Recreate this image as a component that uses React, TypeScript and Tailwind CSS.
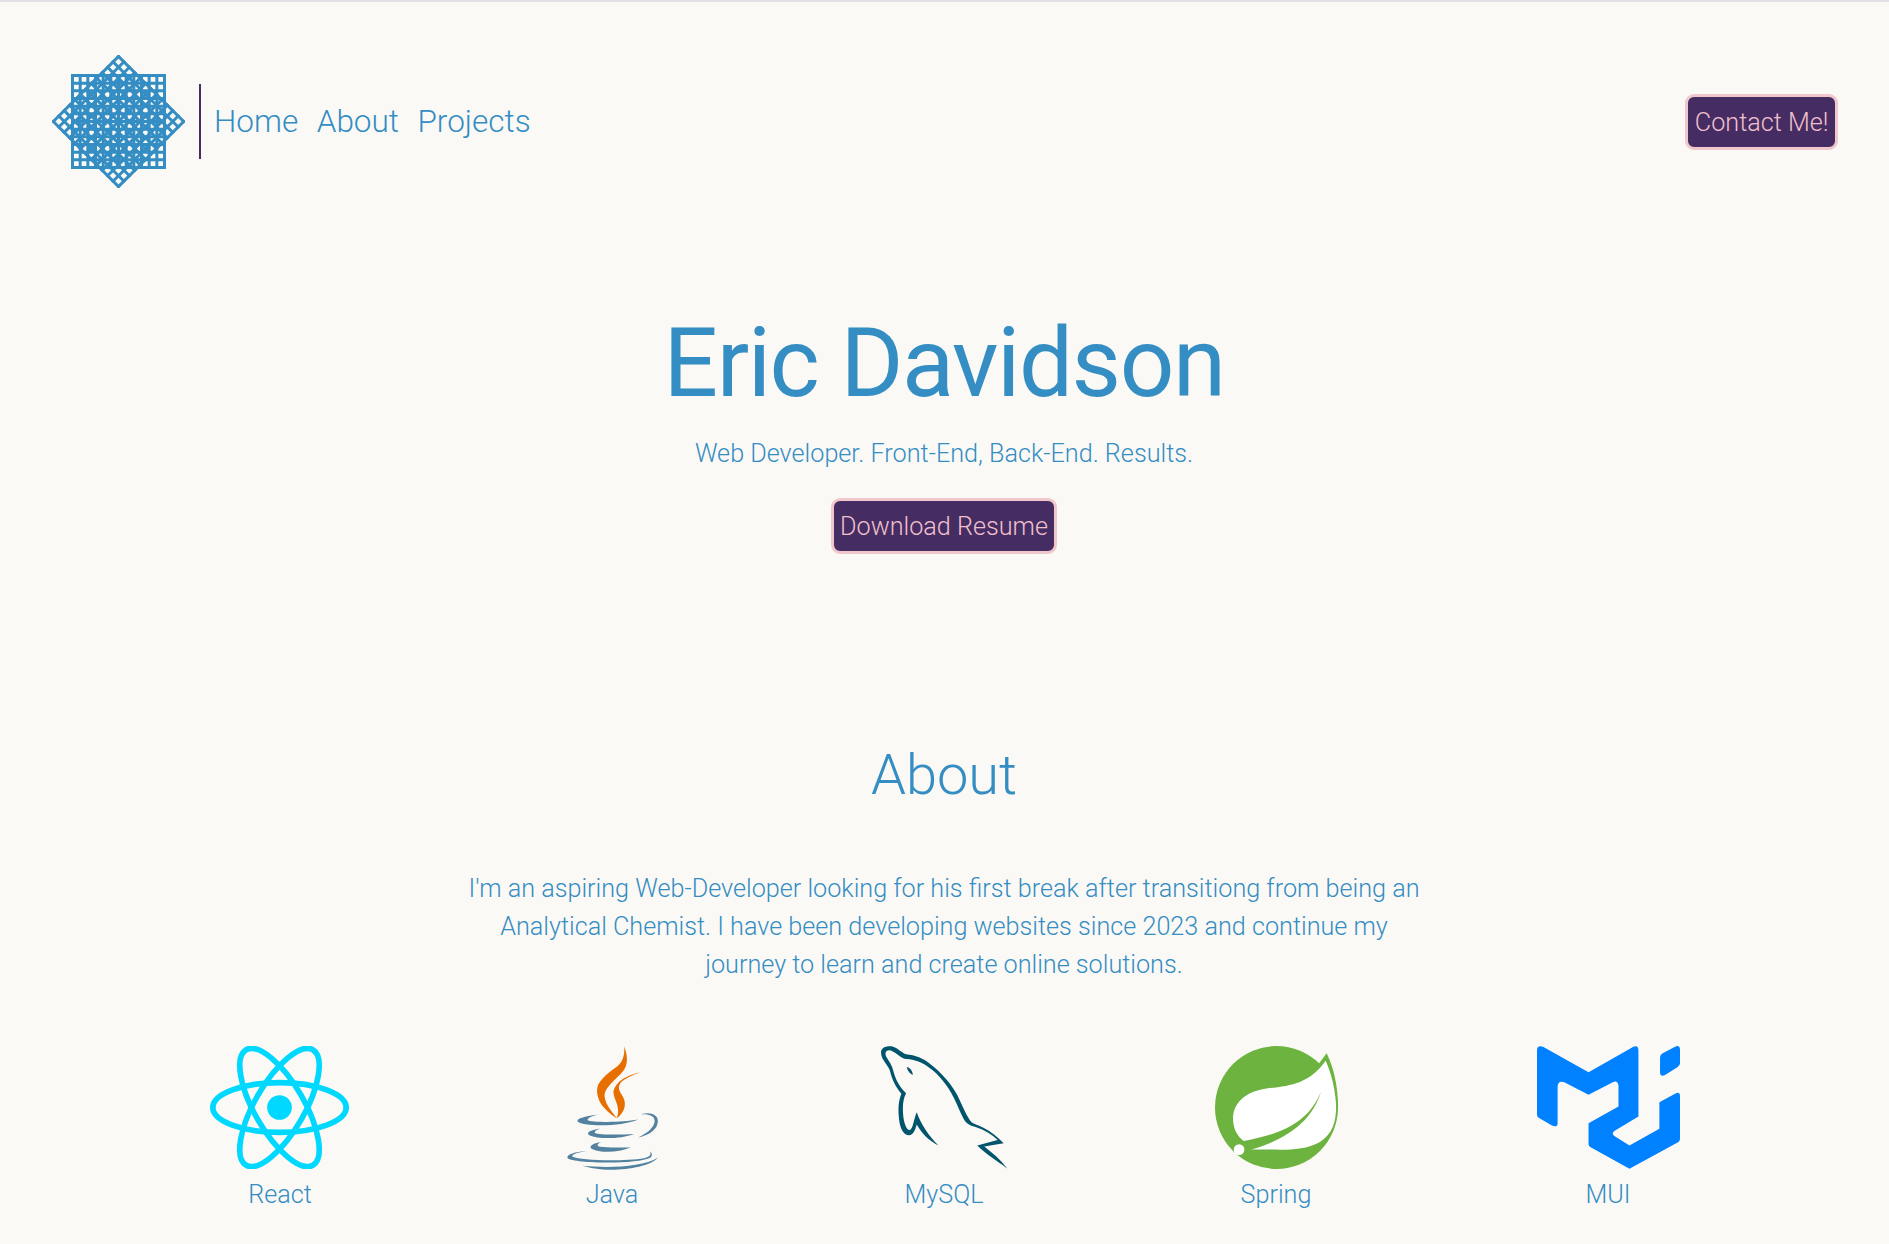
const lines = Array.from({ length: 13 }, (_, i) => i * (92 / 12));

function Grid({ rotate }: { rotate: number }) {
  return (
    <g transform={`rotate(${rotate} 66.5 66.5) translate(20.5 20.5)`} stroke="#348dc3" strokeWidth="3" fill="none">
      {lines.map((p) => (
        <g key={p}>
          <line x1={p} y1="-1.5" x2={p} y2="93.5" />
          <line x1="-1.5" y1={p} x2="93.5" y2={p} />
        </g>
      ))}
    </g>
  );
}

function Logo() {
  return (
    <svg viewBox="0 0 133 133" className="h-[133px] w-[133px]">
      <Grid rotate={0} />
      <Grid rotate={45} />
    </svg>
  );
}

function ReactIcon() {
  return (
    <svg viewBox="60 48 416 368" className="h-[123px] w-[139px] -translate-x-[1px]">
      <g fill="none" stroke="#00d8ff" strokeWidth="17">
        <ellipse cx="268" cy="232" rx="199.5" ry="74.5" />
        <ellipse cx="268" cy="232" rx="199.5" ry="74.5" transform="rotate(60 268 232)" />
        <ellipse cx="268" cy="232" rx="199.5" ry="74.5" transform="rotate(120 268 232)" />
      </g>
      <circle cx="268" cy="232" r="37" fill="#00d8ff" />
    </svg>
  );
}

function JavaIcon() {
  return (
    <svg viewBox="1128 45 274 372" className="h-[124px] w-[91px]">
      <g fill="#e76f00">
        <path d="M1300 45C1303 70 1295 90 1285 100C1270 115 1240 130 1222 160C1212 185 1225 215 1240 230C1252 243 1265 255 1278 262C1262 240 1243 220 1241 195C1240 175 1262 155 1288 130C1308 112 1316 85 1300 45Z" />
        <path d="M1348 123C1310 132 1274 150 1268 180C1266 205 1292 225 1278 262C1300 245 1308 222 1298 200C1288 182 1276 170 1292 152C1302 142 1325 132 1348 123Z" />
      </g>
      <g fill="#5382a1">
        <path d="M1225 250C1185 256 1155 262 1160 272C1170 286 1290 290 1342 266C1290 276 1200 274 1190 268C1188 262 1205 254 1225 250Z" />
        <path d="M1350 250C1385 240 1408 255 1400 280C1395 300 1370 314 1342 320C1372 305 1390 290 1392 270C1392 255 1375 248 1350 250Z" />
        <path d="M1228 293C1195 298 1185 306 1195 313C1225 326 1290 324 1330 309C1285 312 1225 312 1212 306C1210 301 1218 297 1228 293Z" />
        <path d="M1230 333C1200 338 1192 348 1205 355C1235 368 1285 364 1320 350C1285 350 1235 350 1222 346C1218 341 1223 337 1230 333Z" />
        <path d="M1190 360C1145 364 1125 373 1130 382C1150 398 1340 402 1380 380C1386 372 1384 367 1378 363C1382 372 1378 378 1360 382C1300 392 1170 390 1145 378C1138 371 1165 364 1190 360Z" />
        <path d="M1402 380C1380 405 1320 416 1260 417C1225 417 1195 412 1175 405C1250 412 1355 410 1402 380Z" />
      </g>
    </svg>
  );
}

function MysqlIcon() {
  return (
    <svg viewBox="63 47 377 368" className="h-[123px] w-[126px]">
      <path
        fill="#00546b"
        d="M63 66C63 52 78 46 95 48C112 52 122 66 138 72C165 74 190 84 212 102C245 128 272 158 292 195C305 222 315 248 328 268C334 280 350 282 368 291C392 303 412 320 430 338L372 348C395 366 422 388 441 414C412 392 378 372 351 345L412 328C395 312 372 298 348 290C330 286 318 280 310 265C296 238 288 212 272 185C252 152 228 124 196 104C175 91 155 86 132 85C118 80 105 64 90 60C78 59 74 66 78 78C86 92 96 104 100 122C106 146 118 170 138 188C130 202 126 225 130 260C133 280 140 300 150 298C160 290 160 268 170 245C182 280 205 315 235 345C205 330 185 308 170 282C165 298 160 315 145 314C128 312 118 290 116 255C114 232 116 208 124 190C104 165 95 145 90 122C85 104 63 90 63 66Z"
      />
      <path fill="#00546b" d="M140 110C150 112 158 122 158 134C150 130 142 122 140 110Z" />
    </svg>
  );
}

function SpringIcon() {
  return (
    <svg viewBox="1066 48 368 368" className="h-[123px] w-[123px]">
      <circle cx="1250" cy="232" r="184" fill="#6db33f" />
      <path fill="#6db33f" d="M1400 70L1370 110L1420 250L1434 232C1434 170 1422 115 1400 70Z" />
      <path
        fill="#ffffff"
        d="M1397 92C1350 160 1290 168 1220 175C1150 185 1118 225 1120 270C1122 300 1135 320 1152 332C1260 312 1345 280 1383 185C1355 280 1270 330 1175 358C1250 355 1320 368 1380 335C1420 310 1430 270 1428 220C1425 170 1412 125 1397 92Z"
      />
      <circle cx="1138" cy="358" r="16" fill="#ffffff" />
    </svg>
  );
}

function MuiIcon() {
  return (
    <svg viewBox="110 47 430 368" className="h-[123px] w-[143px]">
      <g fill="#0081ff">
        <path d="M110 60Q110 42 128 48L265 125L400 48Q415 42 415 60L415 258L345 300Q330 310 345 318L388 345L478 295L478 215L528 188Q540 183 540 197L540 325Q540 333 530 338L388 415L270 350Q265 347 265 340L265 278L355 228L355 165Q352 148 338 155L265 193L192 155Q172 148 172 170L172 278Q172 292 155 285L115 262Q110 259 110 252Z" />
        <path d="M480 80Q480 72 488 68L525 48Q540 42 540 58L540 98Q540 105 532 110L495 133Q480 140 480 125Z" />
      </g>
    </svg>
  );
}

const techs = [
  { name: "React", Icon: ReactIcon },
  { name: "Java", Icon: JavaIcon },
  { name: "MySQL", Icon: MysqlIcon },
  { name: "Spring", Icon: SpringIcon },
  { name: "MUI", Icon: MuiIcon },
];

const btn =
  "rounded-[9px] border-[3px] border-[#f0c8cc] bg-[#452c63] px-[6.5px] pt-[2px] h-[56px] text-[25.2px] font-light text-[#f0c0cc]";

export default function App() {
  return (
    <div className="min-h-[1244px] border-t-2 border-[#e4e0e6] bg-[#fbf9f5] font-['Roboto',sans-serif] font-light text-[#348dc3]">
      <header className="flex items-center justify-between pl-[52px] pr-[51px] pt-[53px]">
        <div className="flex items-center">
          <Logo />
          <div className="ml-[14px] h-[75px] w-[2px] bg-[#452c63]" />
          <nav className="ml-[13px] flex gap-[18.5px] text-[31.5px]">
            <span>Home</span>
            <span>About</span>
            <span>Projects</span>
          </nav>
        </div>
        <button className={btn}>Contact Me!</button>
      </header>

      <section className="mt-[119px] flex flex-col items-center pr-[1px]">
        <h1 className="text-[96px] font-normal leading-[112px] tracking-[-1.5px]">Eric Davidson</h1>
        <p className="mt-[16px] text-[25.2px] leading-[38px]">Web Developer. Front-End, Back-End. Results.</p>
        <button className={`${btn} mt-[25px]`}>Download Resume</button>
      </section>

      <section className="mt-[183px] flex flex-col items-center pr-[1px]">
        <h2 className="text-[56px] leading-[76px]">About</h2>
        <p className="mt-[57px] w-[960px] text-center text-[25.2px] leading-[37.8px]">
          I'm an aspiring Web-Developer looking for his first break after transitiong from being an Analytical Chemist.
          I have been developing websites since 2023 and continue my journey to learn and create online solutions.
        </p>
        <div className="mt-[63px] grid w-[1660px] grid-cols-5">
          {techs.map(({ name, Icon }) => (
            <div key={name} className="flex flex-col items-center">
              <div className="flex h-[123px] items-center justify-center">
                <Icon />
              </div>
              <span className="mt-[7px] text-[25.2px] leading-[37.8px]">{name}</span>
            </div>
          ))}
        </div>
      </section>
    </div>
  );
}
